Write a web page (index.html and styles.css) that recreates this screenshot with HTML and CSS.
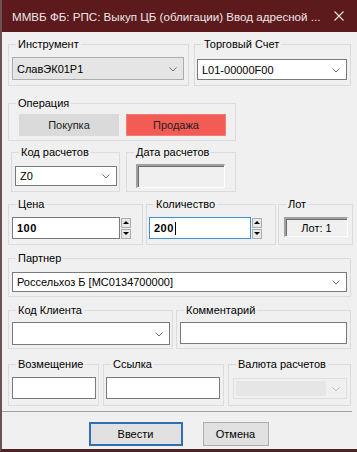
FILE: index.html
```html
<!DOCTYPE html>
<html lang="ru">
<head>
  <meta charset="UTF-8" />
  <title>Ввод адресной заявки</title>
  <link rel="stylesheet" href="styles.css">
</head>
<body>

  <div class="window">
    <div class="titlebar">
      <span class="title">ММВБ ФБ: РПС: Выкуп ЦБ (облигации) Ввод адресной ...</span>
      <svg class="close" width="10" height="10" viewBox="0 0 10 10">
        <path d="M0.5 0.5 L9.5 9.5 M9.5 0.5 L0.5 9.5" stroke="#f0e4e4" stroke-width="1.1" fill="none"/>
      </svg>
    </div>

    <div class="content">
      <div class="row row-1">
        <fieldset class="group g-instr">
          <legend>Инструмент</legend>
          <div class="combo combo-flat c-instr">
            <span>СлавЭК01Р1</span>
            <svg class="chev" width="8" height="5" viewBox="0 0 8 5"><path d="M0.5 0.5 L4 4 L7.5 0.5" stroke="#707070" fill="none"/></svg>
          </div>
        </fieldset>
        <fieldset class="group g-account">
          <legend>Торговый Счет</legend>
          <div class="combo c-account">
            <span>L01-00000F00</span>
            <svg class="chev" width="8" height="5" viewBox="0 0 8 5"><path d="M0.5 0.5 L4 4 L7.5 0.5" stroke="#707070" fill="none"/></svg>
          </div>
        </fieldset>
      </div>

      <div class="row row-2">
        <fieldset class="group g-oper">
          <legend>Операция</legend>
          <div class="oper-buttons">
            <button class="oper buy">Покупка</button>
            <button class="oper sell">Продажа</button>
          </div>
        </fieldset>
      </div>

      <div class="row row-3">
        <fieldset class="group g-code">
          <legend>Код расчетов</legend>
          <div class="combo c-code">
            <span>Z0</span>
            <svg class="chev" width="8" height="5" viewBox="0 0 8 5"><path d="M0.5 0.5 L4 4 L7.5 0.5" stroke="#707070" fill="none"/></svg>
          </div>
        </fieldset>
        <fieldset class="group g-date">
          <legend>Дата расчетов</legend>
          <div class="sunken c-date"></div>
        </fieldset>
      </div>

      <div class="row row-4">
        <fieldset class="group g-price">
          <legend>Цена</legend>
          <div class="spin-field">
            <div class="field bold c-price">100</div>
            <div class="spin">
              <span class="spin-btn"><i class="tri up"></i></span>
              <span class="spin-btn"><i class="tri down"></i></span>
            </div>
          </div>
        </fieldset>
        <fieldset class="group g-qty">
          <legend>Количество</legend>
          <div class="spin-field">
            <div class="field bold focused c-qty">200<span class="caret"></span></div>
            <div class="spin">
              <span class="spin-btn"><i class="tri up"></i></span>
              <span class="spin-btn"><i class="tri down"></i></span>
            </div>
          </div>
        </fieldset>
        <fieldset class="group g-lot">
          <legend>Лот</legend>
          <div class="sunken c-lot">Лот: 1</div>
        </fieldset>
      </div>

      <div class="row row-5">
        <fieldset class="group g-partner">
          <legend>Партнер</legend>
          <div class="combo c-partner">
            <span>Россельхоз Б [MC0134700000]</span>
            <svg class="chev" width="8" height="5" viewBox="0 0 8 5"><path d="M0.5 0.5 L4 4 L7.5 0.5" stroke="#707070" fill="none"/></svg>
          </div>
        </fieldset>
      </div>

      <div class="row row-6">
        <fieldset class="group g-client">
          <legend>Код Клиента</legend>
          <div class="combo c-client">
            <span></span>
            <svg class="chev" width="8" height="5" viewBox="0 0 8 5"><path d="M0.5 0.5 L4 4 L7.5 0.5" stroke="#707070" fill="none"/></svg>
          </div>
        </fieldset>
        <fieldset class="group g-comment">
          <legend>Комментарий</legend>
          <div class="field c-comment"></div>
        </fieldset>
      </div>

      <div class="row row-7">
        <fieldset class="group g-refund">
          <legend>Возмещение</legend>
          <div class="field c-refund"></div>
        </fieldset>
        <fieldset class="group g-link">
          <legend>Ссылка</legend>
          <div class="field c-link"></div>
        </fieldset>
        <fieldset class="group g-currency">
          <legend>Валюта расчетов</legend>
          <div class="combo combo-disabled c-currency">
            <span class="inner"></span>
            <svg class="chev" width="8" height="5" viewBox="0 0 8 5"><path d="M0.5 0.5 L4 4 L7.5 0.5" stroke="#c4c4c4" fill="none"/></svg>
          </div>
        </fieldset>
      </div>

      <div class="separator"></div>

      <div class="actions">
        <button class="btn default">Ввести</button>
        <button class="btn">Отмена</button>
      </div>
    </div>
  </div>

</body>
</html>
```

FILE: styles.css
```css
html, body {
  margin: 0;
  padding: 0;
}
body {
  font-family: "Liberation Sans", Arial, sans-serif;
  font-size: 11px;
  color: #000;
  background: #f0f0f0;
}
.window {
  width: 357px;
  height: 452px;
  box-sizing: border-box;
  border-left: 2px solid #6a5254;
  border-bottom: 3px solid #4e2225;
  background: #f0f0f0;
  overflow: hidden;
}
.titlebar {
  height: 32px;
  margin-left: -2px;
  background: #5c1a1d;
  color: #efe6e6;
  display: flex;
  align-items: center;
  padding: 0 0 0 12px;
}
.title {
  font-size: 11.6px;
  flex: 1;
  white-space: nowrap;
  padding-top: 1px;
}
.close {
  margin-right: 13px;
}

.content {
  padding-top: 5px;
}
.row {
  display: flex;
  align-items: stretch;
}
.group {
  margin: 0;
  padding: 6px 0 5px;
  border: 1px solid #dcdcdc;
  box-sizing: border-box;
  min-width: 0;
}
.group legend {
  margin-left: 7px;
  padding: 0 2px;
  line-height: 14px;
  font-size: 11px;
}

/* rows */
.row-1 { padding-left: 6px; gap: 5px; }
.g-instr { width: 181px; }
.g-account { width: 157px; }
.c-instr { margin-left: 3px; width: 172px; height: 23px; }
.c-account { margin-left: 2px; margin-top: 2px; width: 150px; height: 21px; }

.row-2 { padding-left: 6px; margin-top: 10px; }
.g-oper { width: 228px; padding: 4px 0 4px; }

.row-3 { padding-left: 9px; margin-top: 4px; gap: 6px; }
.g-code { width: 109px; padding: 7px 0 5px; }
.g-date { width: 110px; padding: 5px 0 3px; }
.c-code { margin-left: 3px; width: 102px; height: 20px; }
.c-date { margin-left: 9px; width: 89px; height: 24px; }

.row-4 { padding-left: 6px; margin-top: 5px; gap: 2px; }
.g-price { width: 135px; }
.g-qty { width: 130px; margin-left: 1px; }
.g-lot { width: 75px; }
.c-price { width: 108px; }
.c-qty { width: 102px; }
.g-price .spin-field { margin-left: 3px; }
.g-qty .spin-field { margin-left: 2px; }
.c-lot { margin-left: 5px; width: 64px; height: 20px; }

.row-5 { padding-left: 6px; margin-top: 6px; }
.g-partner { width: 343px; padding: 7px 0 4px; }
.c-partner { margin-left: 3px; width: 335px; height: 20px; }

.row-6 { padding-left: 6px; margin-top: 6px; gap: 3px; }
.g-client { width: 165px; padding: 5px 0 3px; }
.g-comment { width: 175px; padding: 5px 0 3px; }
.c-client { margin-left: 3px; width: 158px; height: 23px; }
.c-comment { margin-left: 3px; width: 167px; height: 23px; }

.row-7 { padding-left: 6px; margin-top: 8px; gap: 4px; }
.g-refund { width: 91px; padding: 6px 0 6px; }
.g-link { width: 121px; padding: 6px 0 6px; }
.g-currency { width: 123px; padding: 6px 0 6px; }
.c-refund { margin-left: 3px; width: 84px; height: 24px; }
.c-link { margin-left: 2px; width: 114px; height: 24px; }
.c-currency { margin-left: 4px; margin-top: 1px; width: 114px; height: 21px; }

/* controls */
.combo {
  box-sizing: border-box;
  border: 1px solid #7a7a7a;
  background: #fff;
  display: flex;
  align-items: center;
  padding: 0 6px 0 4px;
  font-size: 11px;
}
.combo span {
  flex: 1;
  white-space: nowrap;
}
.combo-flat {
  background: #e5e5e5;
  border-color: #adadad;
}
.combo-disabled {
  background: #f0f0f0;
  border-color: #dedede;
  padding: 2px 6px 2px 2px;
}
.combo-disabled .inner {
  align-self: stretch;
  background: #e6e6e6;
  margin-right: 6px;
}
.chev {
  flex: none;
  margin-top: 1px;
}

.field {
  box-sizing: border-box;
  border: 1px solid #7a7a7a;
  background: #fff;
  height: 22px;
  padding: 0 4px;
  display: flex;
  align-items: center;
}
.field.bold {
  font-weight: bold;
  font-size: 11px;
  letter-spacing: 0.5px;
}
.field.focused {
  border-color: #3d8ed6;
}
.caret {
  display: inline-block;
  width: 1px;
  height: 13px;
  background: #000;
  margin-left: 1px;
}
.spin-field {
  display: flex;
  gap: 1px;
}
.spin {
  display: flex;
  flex-direction: column;
  justify-content: center;
  gap: 1px;
}
.spin-btn {
  box-sizing: border-box;
  width: 10px;
  height: 10px;
  border: 1px solid #adadad;
  background: #e8e8e8;
  display: flex;
  align-items: center;
  justify-content: center;
}
.tri {
  width: 0;
  height: 0;
  border-left: 3px solid transparent;
  border-right: 3px solid transparent;
}
.tri.up { border-bottom: 3px solid #000; }
.tri.down { border-top: 3px solid #000; }

.sunken {
  box-sizing: border-box;
  border-top: 2px solid #a0a0a0;
  border-left: 2px solid #a0a0a0;
  border-bottom: 1px solid #fff;
  border-right: 1px solid #fff;
  box-shadow: inset 1px 1px 0 #6d6d6d;
  background: #f0f0f0;
}
.c-lot {
  display: flex;
  align-items: center;
  justify-content: center;
}

.oper-buttons {
  display: flex;
  gap: 7px;
  margin-left: 10px;
}
.oper {
  font-family: inherit;
  font-size: 11px;
  width: 100px;
  height: 22px;
  border: none;
  padding: 0;
  color: #222;
}
.buy { background: #dadada; }
.sell {
  background: #f25c55;
  box-shadow: inset 0 0 0 1px #f47a74;
}

.separator {
  margin-top: 5px;
  width: 350px;
  height: 1px;
  background: #a0a0a0;
}
.actions {
  display: flex;
  justify-content: center;
  gap: 20px;
  margin-top: 10px;
  margin-left: -2px;
}
.btn {
  font-family: inherit;
  font-size: 11px;
  box-sizing: border-box;
  height: 24px;
  width: 66px;
  padding: 0;
  background: #e1e1e1;
  border: 1px solid #adadad;
  color: #000;
}
.btn.default {
  width: 94px;
  border: 2px solid #2d6fb3;
}
```
